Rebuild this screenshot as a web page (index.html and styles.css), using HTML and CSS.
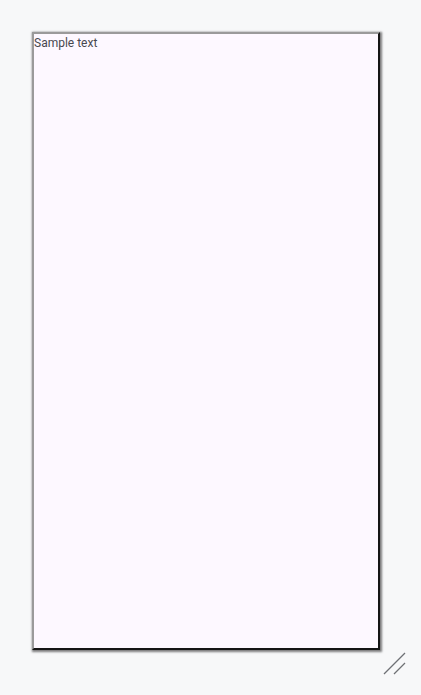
FILE: index.html
```html
<!DOCTYPE html>
<html>
<head>
<meta charset="utf-8">
<link rel="stylesheet" href="styles.css">
</head>
<body>
<div class="frame">
  <div class="box">Sample text</div>
  <svg class="grip" width="24" height="24" viewBox="0 0 24 24">
    <line x1="1" y1="22" x2="22" y2="1" stroke="#6f7175" stroke-width="1.3"/>
    <line x1="11" y1="22" x2="22" y2="11" stroke="#6f7175" stroke-width="1.3"/>
  </svg>
</div>
</body>
</html>
```
FILE: styles.css
```css
html, body {
  margin: 0;
  padding: 0;
  background: #f7f8f9;
}
.frame {
  position: relative;
  width: 421px;
  height: 695px;
  box-sizing: border-box;
  padding: 32px 40px 44px 32px;
}
.box {
  width: 348px;
  height: 618px;
  box-sizing: border-box;
  background: #fdf8ff;
  border-style: solid;
  border-width: 2px;
  border-color: #9a9a9a #151515 #151515 #9a9a9a;
  box-shadow: 1px 1px 2px 1px rgba(0,0,0,0.5);
  font-family: Roboto, "Liberation Sans", sans-serif;
  font-size: 12px;
  line-height: 14px;
  color: #48484f;
  padding: 2px 0 0 0;
}
.grip {
  position: absolute;
  left: 383px;
  top: 652px;
}
```
